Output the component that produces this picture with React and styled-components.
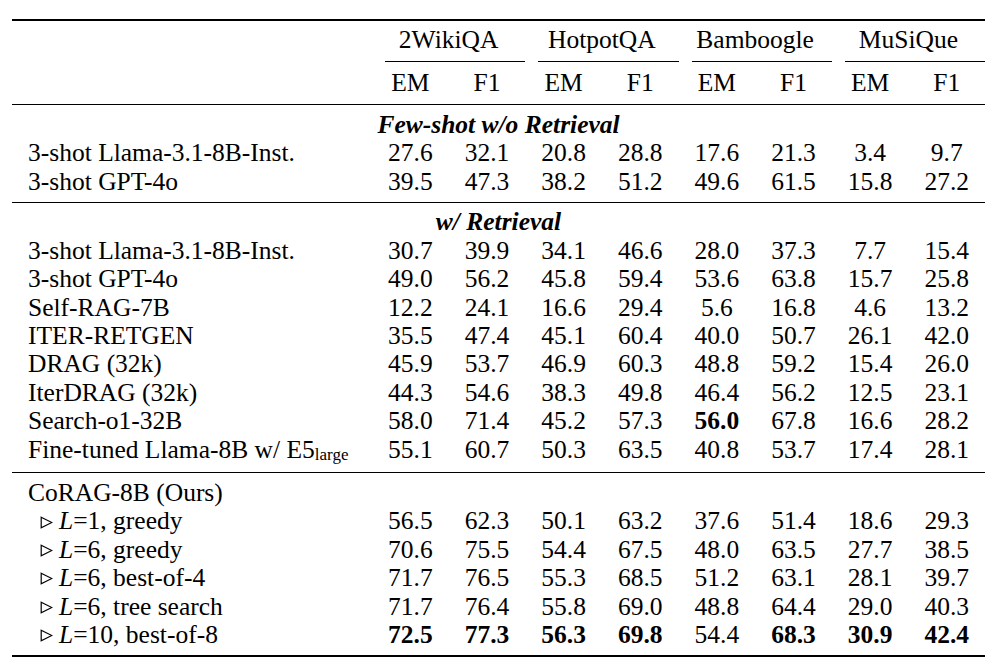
import React from 'react';
import styled, { createGlobalStyle } from 'styled-components';

const GlobalStyle = createGlobalStyle`
  html, body {
    margin: 0;
    padding: 0;
    background: #ffffff;
  }
  body {
    font-family: "Liberation Serif", "Times New Roman", serif;
    color: #000;
  }
`;

const Page = styled.div`
  padding: 19px 0 0 12px;
  width: 973px;
`;

const Table = styled.div`
  display: flex;
  flex-direction: column;
  width: 973px;
  font-family: "Liberation Serif", "Times New Roman", serif;
  font-size: 25.5px;
`;

const Rule = styled.div`
  height: ${p => p.thick ? 2 : 1}px;
  background: #000;
  margin: ${p => p.gap || '0'};
`;

const Row = styled.div`
  display: grid;
  grid-template-columns: 360px repeat(8, 1fr);
  height: 28.4px;
  line-height: 28.4px;
  align-items: center;
`;

const Label = styled.div`
  padding-left: ${p => p.indent ? 28 : 16}px;
  white-space: nowrap;
  display: flex;
  align-items: center;
`;

const Cell = styled.div`
  text-align: center;
  font-weight: ${p => p.bold ? 700 : 400};
`;

const Group = styled.div`
  grid-column: span 2;
  text-align: center;
`;

const MidRuleRow = styled.div`
  display: grid;
  grid-template-columns: 360px repeat(4, 1fr);
  height: 1px;
  margin: 6.8px 0;
`;

const CMid = styled.div`
  margin-left: 13px;
  height: 1px;
  background: #000;
`;

const Section = styled.div`
  grid-column: 1 / -1;
  text-align: center;
  font-weight: 700;
  font-style: italic;
`;

const Sub = styled.span`
  font-size: 17px;
  position: relative;
  top: 5px;
`;

const Var = styled.i`
  margin-left: 6px;
`;

const Tri = () => (
  <svg width="13" height="13" viewBox="0 0 13 13" style={{ marginTop: 1 }}>
    <path d="M1.2 1.2 L11.8 6.5 L1.2 11.8 Z" fill="none" stroke="#000" strokeWidth="1.2" />
  </svg>
);

const groups = ['2WikiQA', 'HotpotQA', 'Bamboogle', 'MuSiQue'];

const fewShot = [
  { name: '3-shot Llama-3.1-8B-Inst.', v: ['27.6', '32.1', '20.8', '28.8', '17.6', '21.3', '3.4', '9.7'] },
  { name: '3-shot GPT-4o', v: ['39.5', '47.3', '38.2', '51.2', '49.6', '61.5', '15.8', '27.2'] },
];

const retrieval = [
  { name: '3-shot Llama-3.1-8B-Inst.', v: ['30.7', '39.9', '34.1', '46.6', '28.0', '37.3', '7.7', '15.4'] },
  { name: '3-shot GPT-4o', v: ['49.0', '56.2', '45.8', '59.4', '53.6', '63.8', '15.7', '25.8'] },
  { name: 'Self-RAG-7B', v: ['12.2', '24.1', '16.6', '29.4', '5.6', '16.8', '4.6', '13.2'] },
  { name: 'ITER-RETGEN', v: ['35.5', '47.4', '45.1', '60.4', '40.0', '50.7', '26.1', '42.0'] },
  { name: 'DRAG (32k)', v: ['45.9', '53.7', '46.9', '60.3', '48.8', '59.2', '15.4', '26.0'] },
  { name: 'IterDRAG (32k)', v: ['44.3', '54.6', '38.3', '49.8', '46.4', '56.2', '12.5', '23.1'] },
  { name: 'Search-o1-32B', v: ['58.0', '71.4', '45.2', '57.3', '56.0', '67.8', '16.6', '28.2'], bold: [4] },
  { name: <>Fine-tuned Llama-8B w/ E5<Sub>large</Sub></>, v: ['55.1', '60.7', '50.3', '63.5', '40.8', '53.7', '17.4', '28.1'] },
];

const ours = [
  { L: '1', cfg: 'greedy', v: ['56.5', '62.3', '50.1', '63.2', '37.6', '51.4', '18.6', '29.3'] },
  { L: '6', cfg: 'greedy', v: ['70.6', '75.5', '54.4', '67.5', '48.0', '63.5', '27.7', '38.5'] },
  { L: '6', cfg: 'best-of-4', v: ['71.7', '76.5', '55.3', '68.5', '51.2', '63.1', '28.1', '39.7'] },
  { L: '6', cfg: 'tree search', v: ['71.7', '76.4', '55.8', '69.0', '48.8', '64.4', '29.0', '40.3'] },
  { L: '10', cfg: 'best-of-8', v: ['72.5', '77.3', '56.3', '69.8', '54.4', '68.3', '30.9', '42.4'], bold: [0, 1, 2, 3, 5, 6, 7] },
];

const Values = ({ v, bold = [] }) => v.map((x, i) => (
  <Cell key={i} bold={bold.includes(i)}>{x}</Cell>
));

const App = () => {
  return (
    <>
      <GlobalStyle />
      <Page>
        <Table>
          <Rule thick gap="0 0 4.8px 0" />
          <Row>
            <div />
            {groups.map(g => <Group key={g}>{g}</Group>)}
          </Row>
          <MidRuleRow>
            <div />
            {groups.map(g => <CMid key={g} />)}
          </MidRuleRow>
          <Row>
            <div />
            {groups.map(g => (
              <React.Fragment key={g}>
                <Cell>EM</Cell>
                <Cell>F1</Cell>
              </React.Fragment>
            ))}
          </Row>
          <Rule gap="6.8px 0 6px 0" />

          <Row><Section>Few-shot w/o Retrieval</Section></Row>
          {fewShot.map((r, i) => (
            <Row key={i}>
              <Label>{r.name}</Label>
              <Values v={r.v} bold={r.bold} />
            </Row>
          ))}
          <Rule gap="6.3px 0 5px 0" />

          <Row><Section>w/ Retrieval</Section></Row>
          {retrieval.map((r, i) => (
            <Row key={i}>
              <Label>{r.name}</Label>
              <Values v={r.v} bold={r.bold} />
            </Row>
          ))}
          <Rule gap="7.8px 0 6.3px 0" />

          <Row>
            <Label>CoRAG-8B (Ours)</Label>
          </Row>
          {ours.map((r, i) => (
            <Row key={i}>
              <Label indent>
                <Tri />
                <Var>L</Var>={r.L}, {r.cfg}
              </Label>
              <Values v={r.v} bold={r.bold} />
            </Row>
          ))}
          <Rule thick gap="6px 0 0 0" />
        </Table>
      </Page>
    </>
  );
};

export default App;
